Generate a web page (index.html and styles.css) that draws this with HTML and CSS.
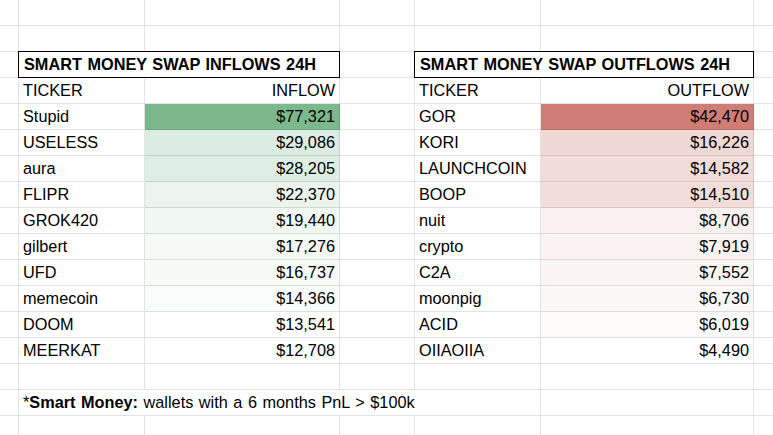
FILE: index.html
```html
<!DOCTYPE html>
<html>
<head>
<meta charset="utf-8">
<link rel="stylesheet" href="styles.css">
</head>
<body>
<div class="sheet">
  <!-- row 1 -->
  <div class="c"></div><div class="c"></div><div class="c"></div><div class="c"></div><div class="c"></div><div class="c"></div><div class="c"></div>
  <!-- row 2 -->
  <div class="c"></div><div class="c"></div><div class="c"></div><div class="c"></div><div class="c"></div><div class="c"></div><div class="c"></div>
  <!-- row 3: titles -->
  <div class="c"></div>
  <div class="c title span2">SMART MONEY SWAP INFLOWS 24H</div>
  <div class="c"></div>
  <div class="c title span2">SMART MONEY SWAP OUTFLOWS 24H</div>
  <div class="c"></div>
  <!-- row 4: headers -->
  <div class="c"></div><div class="c">TICKER</div><div class="c num">INFLOW</div><div class="c"></div><div class="c">TICKER</div><div class="c num">OUTFLOW</div><div class="c"></div>
  <!-- data rows -->
  <div class="c"></div><div class="c">Stupid</div><div class="c num" style="background:rgb(123,185,141)">$77,321</div><div class="c"></div><div class="c">GOR</div><div class="c num" style="background:rgb(207,125,117)">$42,470</div><div class="c"></div>
  <div class="c"></div><div class="c">USELESS</div><div class="c num" style="background:rgb(221,236,226)">$29,086</div><div class="c"></div><div class="c">KORI</div><div class="c num" style="background:rgb(240,216,212)">$16,226</div><div class="c"></div>
  <div class="c"></div><div class="c">aura</div><div class="c num" style="background:rgb(223,238,228)">$28,205</div><div class="c"></div><div class="c">LAUNCHCOIN</div><div class="c num" style="background:rgb(241,220,218)">$14,582</div><div class="c"></div>
  <div class="c"></div><div class="c">FLIPR</div><div class="c num" style="background:rgb(235,244,238)">$22,370</div><div class="c"></div><div class="c">BOOP</div><div class="c num" style="background:rgb(242,221,219)">$14,510</div><div class="c"></div>
  <div class="c"></div><div class="c">GROK420</div><div class="c num" style="background:rgb(241,248,243)">$19,440</div><div class="c"></div><div class="c">nuit</div><div class="c num" style="background:rgb(250,240,239)">$8,706</div><div class="c"></div>
  <div class="c"></div><div class="c">gilbert</div><div class="c num" style="background:rgb(245,250,246)">$17,276</div><div class="c"></div><div class="c">crypto</div><div class="c num" style="background:rgb(251,243,242)">$7,919</div><div class="c"></div>
  <div class="c"></div><div class="c">UFD</div><div class="c num" style="background:rgb(246,251,248)">$16,737</div><div class="c"></div><div class="c">C2A</div><div class="c num" style="background:rgb(251,245,244)">$7,552</div><div class="c"></div>
  <div class="c"></div><div class="c">memecoin</div><div class="c num" style="background:rgb(251,253,252)">$14,366</div><div class="c"></div><div class="c">moonpig</div><div class="c num" style="background:rgb(251,248,247)">$6,730</div><div class="c"></div>
  <div class="c"></div><div class="c">DOOM</div><div class="c num" style="background:rgb(254,255,254)">$13,541</div><div class="c"></div><div class="c">ACID</div><div class="c num" style="background:rgb(252,251,250)">$6,019</div><div class="c"></div>
  <div class="c"></div><div class="c">MEERKAT</div><div class="c num">$12,708</div><div class="c"></div><div class="c">OIIAOIIA</div><div class="c num">$4,490</div><div class="c"></div>
  <!-- row 15 -->
  <div class="c"></div><div class="c"></div><div class="c"></div><div class="c"></div><div class="c"></div><div class="c"></div><div class="c"></div>
  <!-- row 16: footnote -->
  <div class="c"></div>
  <div class="c span4">*<b>Smart Money:</b> wallets with a 6 months PnL &gt; $100k</div>
  <div class="c"></div><div class="c"></div>
  <!-- row 17 -->
  <div class="c"></div><div class="c"></div><div class="c"></div><div class="c"></div><div class="c"></div><div class="c"></div><div class="c"></div>
</div>
</body>
</html>
```
FILE: styles.css
```css
html, body {
  margin: 0;
  padding: 0;
  background: #fff;
  overflow: hidden;
}

.sheet {
  display: grid;
  grid-template-columns: 19px 126px 195px 75px 126px 213px 40px;
  grid-auto-rows: 26px;
  font-family: "Liberation Sans", Arial, sans-serif;
  font-size: 16.3px;
  word-spacing: 1px;
  color: #000;
  width: 800px;
}

.c {
  box-sizing: border-box;
  border-right: 1px solid rgba(0, 0, 0, 0.11);
  border-bottom: 1px solid rgba(0, 0, 0, 0.11);
  padding: 0 4px 0 4px;
  line-height: 25px;
  white-space: nowrap;
  overflow: hidden;
}

.num {
  text-align: right;
}

.span2 {
  grid-column: span 2;
}

.span4 {
  grid-column: span 4;
}

.title {
  border: 1px solid #000;
  margin: -1px 0 0 -1px;
  padding-left: 5px;
  font-weight: bold;
  line-height: 25px;
}

b {
  font-weight: bold;
}
```
